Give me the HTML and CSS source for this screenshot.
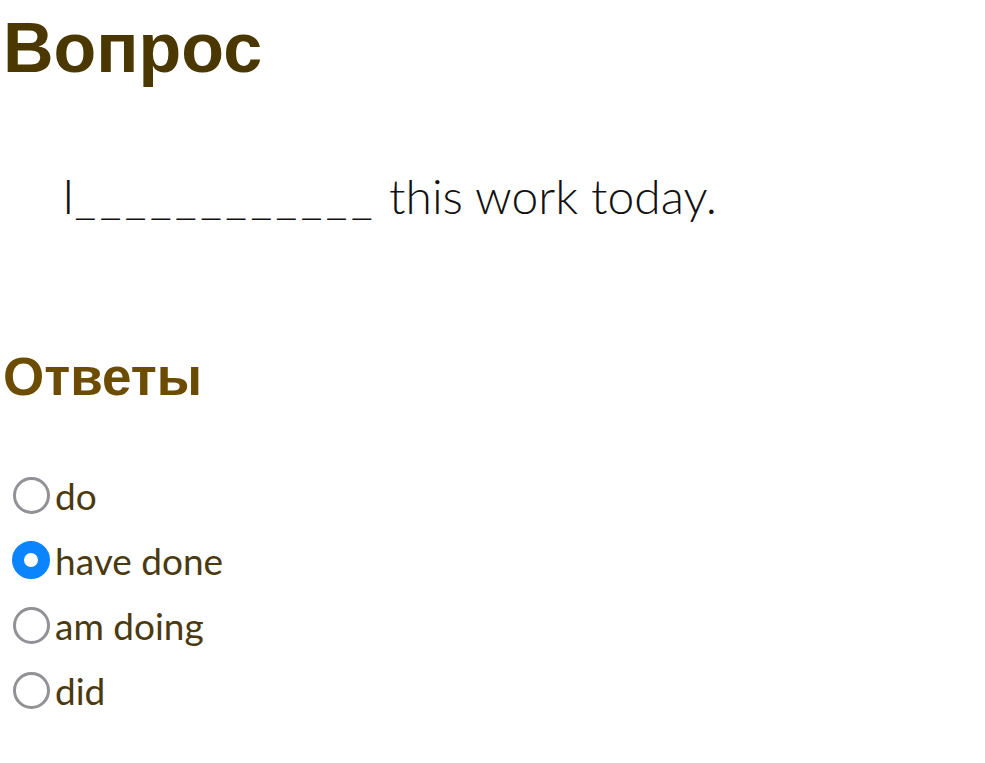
FILE: index.html
```html
<!DOCTYPE html>
<html lang="ru">
<head>
    <meta charset="UTF-8">
    <title>Вопрос</title>
    <link rel="stylesheet" href="styles.css">
</head>
<body>
    <div class="quiz">
        <h1 class="title">Вопрос</h1>
        <p class="question">I<span class="blank">____________</span> this work today.</p>
        <h2 class="subtitle">Ответы</h2>
        <form class="answers">
            <label class="answer">
                <input type="radio" name="answer" value="do">
                <span>do</span>
            </label>
            <label class="answer">
                <input type="radio" name="answer" value="have done" checked>
                <span>have done</span>
            </label>
            <label class="answer">
                <input type="radio" name="answer" value="am doing">
                <span>am doing</span>
            </label>
            <label class="answer">
                <input type="radio" name="answer" value="did">
                <span>did</span>
            </label>
        </form>
    </div>
</body>
</html>
```

FILE: styles.css
```css
body {
    margin: 0;
    background-color: #fff;
    font-family: Lato, "Open Sans", sans-serif;
}
.quiz {
    padding: 0 0 0 3px;
}
.title {
    margin: 0;
    padding-top: 8px;
    font-family: "Liberation Sans", Arial, sans-serif;
    font-size: 70px;
    font-weight: bold;
    line-height: 80px;
    color: #4a3800;
}
.question {
    margin: 78px 0 0 59px;
    font-size: 48px;
    font-weight: 300;
    line-height: 60px;
    color: #111;
}
.blank {
    letter-spacing: 3.5px;
}
.subtitle {
    margin: 121px 0 0 0;
    font-family: "Liberation Sans", Arial, sans-serif;
    font-size: 53px;
    font-weight: bold;
    line-height: 60px;
    color: #6b4c00;
}
.answers {
    margin-top: 64px;
    display: flex;
    flex-direction: column;
    gap: 17px;
}
.answer {
    display: flex;
    align-items: center;
    height: 48px;
    font-size: 37px;
    color: #4b3a10;
}
.answer input {
    appearance: none;
    -webkit-appearance: none;
    box-sizing: border-box;
    width: 37px;
    height: 37px;
    margin: 0 5px 0 10px;
    border: 3px solid #919196;
    border-radius: 50%;
    background: #fff;
}
.answer input:checked {
    border: 12px solid #0a84ff;
    width: 38px;
    height: 38px;
    margin-left: 9px;
    margin-right: 5px;
}
```
